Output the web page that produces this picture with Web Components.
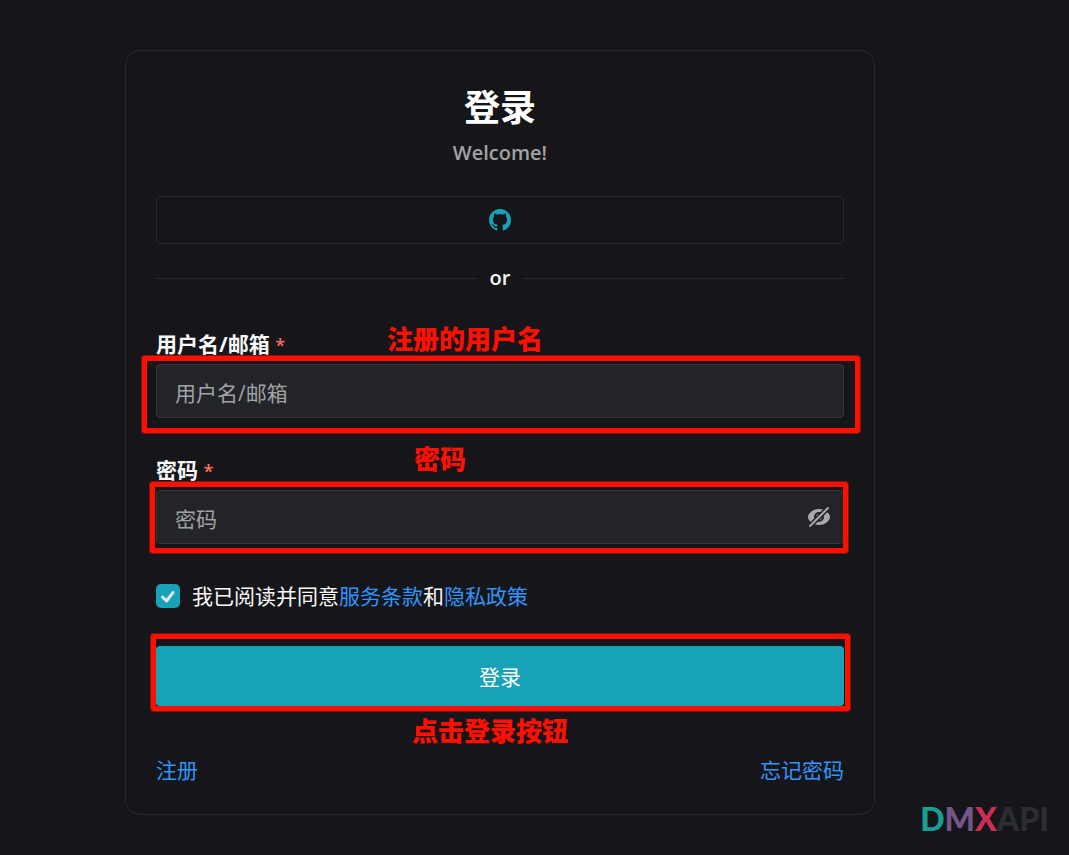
<!DOCTYPE html>
<html lang="zh-CN">
<head>
<meta charset="utf-8">
<meta name="viewport" content="width=device-width, initial-scale=1">
<title>登录</title>
<style>
  body {
    margin: 0;
    min-height: 100vh;
    background: #16161a;
    color: #f9f9f9;
    font-family: "Open Sans", "Noto Sans CJK SC", sans-serif;
    font-size: 21px;
    line-height: 28px;
  }
</style>
</head>
<body>
<login-page></login-page>

<script>
class CalloutBox extends HTMLElement {
  constructor () {
    super()
    this.attachShadow({ mode: 'open' }).innerHTML = `
            <style>
            :host {
                position: absolute;
                inset: var(--box);
                box-sizing: border-box;
                border: 5px solid #ff0f00;
                outline: 1px solid #7c1510;
                border-radius: 2px;
                pointer-events: none;
            }

            span {
                position: absolute;
                left: var(--text-x);
                top: var(--text-y);
                color: #ff0f00;
                font-size: 26px;
                font-weight: 900;
                line-height: 32px;
                white-space: nowrap;
            }
            </style>
            <span><slot></slot></span>
        `
  }
}

class FormField extends HTMLElement {
  connectedCallback () {
    const type = this.getAttribute('type') || 'text'
    this.attachShadow({ mode: 'open' }).innerHTML = `
            <style>
            :host {
                display: grid;
                gap: 6px;
            }

            label {
                color: #f9f9f9;
                font-weight: 700;
            }

            .required {
                color: #fc725a;
                font-size: 18px;
                font-weight: 600;
                line-height: 1;
            }

            .control {
                position: relative;
                display: flex;
                align-items: center;
                box-sizing: border-box;
                height: 54px;
                padding: 0 12px 0 18px;
                border: 1px solid #35363a;
                border-radius: 4px;
                background: #232429;
            }

            input {
                flex: 1;
                min-width: 0;
                padding: 3px 0 0;
                border: 0;
                outline: 0;
                background: none;
                color: inherit;
                font: inherit;
            }

            input::placeholder {
                color: #a2a2a5;
                opacity: 1;
            }
            </style>
            <label for="field">${this.getAttribute('label')} <span class="required">*</span></label>
            <div class="control">
                <input id="field" type="${type}" placeholder="${this.getAttribute('label')}" required>
                <slot name="suffix"></slot>
                <slot></slot>
            </div>
        `
  }
}

class EyeToggle extends HTMLElement {
  constructor () {
    super()
    this.attachShadow({ mode: 'open' }).innerHTML = `
            <style>
            :host {
                display: flex;
            }

            button {
                display: flex;
                padding: 0;
                border: 0;
                background: none;
                color: #a8a8aa;
                cursor: pointer;
            }
            </style>
            <button type="button" aria-label="显示密码">
                <svg width="24" height="24" viewBox="0 0 24 24" fill="none" aria-hidden="true">
                    <mask id="cut" maskUnits="userSpaceOnUse" x="0" y="0" width="24" height="24">
                        <path fill="#fff" d="M0 0h24v24H0z"/>
                        <path stroke="#000" stroke-width="5" d="M0 24 24 0"/>
                    </mask>
                    <g mask="url(#cut)">
                        <path fill="currentColor" fill-rule="evenodd" d="M12 4C5 4 1 9 1 12s4 8 11 8 11-5 11-8-4-8-11-8Zm0 13a5 5 0 1 0 0-10 5 5 0 0 0 0 10Z"/>
                        <circle cx="12" cy="12" r="3" fill="currentColor"/>
                    </g>
                    <path stroke="currentColor" stroke-width="2" stroke-linecap="round" d="M3 21 21 3"/>
                </svg>
            </button>
        `
  }
}

class AgreeCheck extends HTMLElement {
  constructor () {
    super()
    this.attachShadow({ mode: 'open' }).innerHTML = `
            <style>
            :host {
                display: flex;
                align-items: center;
                gap: 12px;
            }

            .box {
                display: grid;
            }

            input,
            svg {
                grid-area: 1 / 1;
                width: 24px;
                height: 24px;
                margin: 0;
            }

            input {
                appearance: none;
                border-radius: 5px;
                background: #18a2b8;
            }

            svg {
                pointer-events: none;
            }

            input:not(:checked) + svg {
                visibility: hidden;
            }
            </style>
            <span class="box">
                <input id="agree" type="checkbox" checked>
                <svg viewBox="0 0 24 24" fill="none" stroke="#e4e7f5" stroke-width="3" stroke-linecap="round" stroke-linejoin="round" aria-hidden="true">
                    <path d="m6.500 13 4 4 6.500-8.500"/>
                </svg>
            </span>
            <label for="agree"><slot></slot></label>
        `
  }
}

class TextDivider extends HTMLElement {
  constructor () {
    super()
    this.attachShadow({ mode: 'open' }).innerHTML = `
            <style>
            :host {
                display: flex;
                align-items: center;
                gap: 12px;
                font-size: 20px;
                font-weight: 600;
            }

            :host::before,
            :host::after {
                content: "";
                flex: 1;
                border-top: 1px solid #29292d;
            }
            </style>
            <slot></slot>
        `
  }
}

class BrandLogo extends HTMLElement {
  constructor () {
    super()
    this.attachShadow({ mode: 'open' }).innerHTML = `
            <style>
            :host {
                position: absolute;
                right: 20px;
                bottom: 16px;
                color: #2a2e30;
                font: 900 32px/40px Lato, sans-serif;
            }

            .d { color: #18a096; }
            .m { color: #755688; }
            .x { color: #cb2d55; }
            </style>
            <span class="d">D</span><span class="m">M</span><span class="x">X</span><span>API</span>
        `
  }
}

class LoginPage extends HTMLElement {
  constructor () {
    super()
    this.attachShadow({ mode: 'open' }).innerHTML = `
            <style>
            :host {
                position: relative;
                display: block;
                box-sizing: border-box;
                min-height: 100vh;
                padding: 50px 194px 40px 125px;
            }

            form {
                display: flex;
                flex-direction: column;
                padding: 30px;
                border: 1px solid #29292d;
                border-radius: 15px;
            }

            h1 {
                margin: 0;
                font-size: 36px;
                font-weight: 700;
                line-height: 54px;
                text-align: center;
                color: #fff;
            }

            p {
                margin: 0;
                color: #a2a2a3;
                font-size: 20px;
                font-weight: 600;
                line-height: 36px;
                text-align: center;
            }

            button {
                font: inherit;
                cursor: pointer;
            }

            .github {
                display: flex;
                align-items: center;
                justify-content: center;
                height: 48px;
                margin: 25px 0 20px;
                border: 1px solid #29292d;
                border-radius: 4px;
                background: none;
                color: #18a2b8;
            }

            form-field,
            agree-check {
                margin-top: 38px;
            }

            .submit {
                position: relative;
                display: grid;
                margin-top: 36px;
            }

            .submit button {
                height: 60px;
                padding: 2px 0 0;
                border: 0;
                border-radius: 4px;
                background: #18a2b8;
                color: #fff;
            }

            a {
                color: #3295fb;
                text-decoration: none;
            }

            nav {
                display: flex;
                justify-content: space-between;
                margin-top: 50px;
            }

            .name-box { --box: -9px -17px -16px -15px; --text-x: 240px; --text-y: -38px; }
            .pass-box { --box: -9px -5px -10px -7px; --text-x: 259px; --text-y: -44px; }
            .submit-box { --box: -12px -6px -5px -5px; --text-x: 256px; --text-y: 76px; }
            </style>
            <form>
                <h1>登录</h1>
                <p>Welcome!</p>
                <button class="github" type="button" aria-label="GitHub">
                    <svg width="22" height="22" viewBox="0 0 16 16" fill="currentColor" aria-hidden="true">
                        <path d="M8 0C3.580 0 0 3.580 0 8c0 3.540 2.290 6.530 5.470 7.590.4.070.55-.17.55-.38 0-.19-.01-.82-.01-1.490-2.010.37-2.530-.49-2.690-.94-.09-.23-.48-.94-.82-1.130-.28-.15-.68-.52-.01-.53.63-.01 1.080.58 1.230.82.72 1.210 1.870.87 2.330.66.07-.52.28-.87.51-1.070-1.780-.2-3.640-.89-3.640-3.950 0-.87.31-1.590.82-2.150-.08-.2-.36-1.020.08-2.120 0 0 .67-.21 2.200.82.64-.18 1.320-.27 2-.27s1.360.09 2 .27c1.530-1.040 2.200-.82 2.200-.82.44 1.100.16 1.920.08 2.120.51.56.82 1.270.82 2.150 0 3.070-1.870 3.750-3.650 3.950.29.25.54.73.54 1.480 0 1.070-.01 1.930-.01 2.200 0 .21.15.46.55.38A8.010 8.010 0 0 0 16 8c0-4.420-3.580-8-8-8Z"/>
                    </svg>
                </button>
                <text-divider>or</text-divider>
                <form-field label="用户名/邮箱">
                    <callout-box class="name-box">注册的用户名</callout-box>
                </form-field>
                <form-field label="密码" type="password">
                    <eye-toggle slot="suffix"></eye-toggle>
                    <callout-box class="pass-box">密码</callout-box>
                </form-field>
                <agree-check>我已阅读并同意<a href="#terms">服务条款</a>和<a href="#privacy">隐私政策</a></agree-check>
                <div class="submit">
                    <button type="submit">登录</button>
                    <callout-box class="submit-box">点击登录按钮</callout-box>
                </div>
                <nav>
                    <a href="#register">注册</a>
                    <a href="#reset">忘记密码</a>
                </nav>
            </form>
            <brand-logo></brand-logo>
        `
  }
}

customElements.define('callout-box', CalloutBox)
customElements.define('form-field', FormField)
customElements.define('eye-toggle', EyeToggle)
customElements.define('agree-check', AgreeCheck)
customElements.define('text-divider', TextDivider)
customElements.define('brand-logo', BrandLogo)
customElements.define('login-page', LoginPage)
</script>
</body>
</html>
